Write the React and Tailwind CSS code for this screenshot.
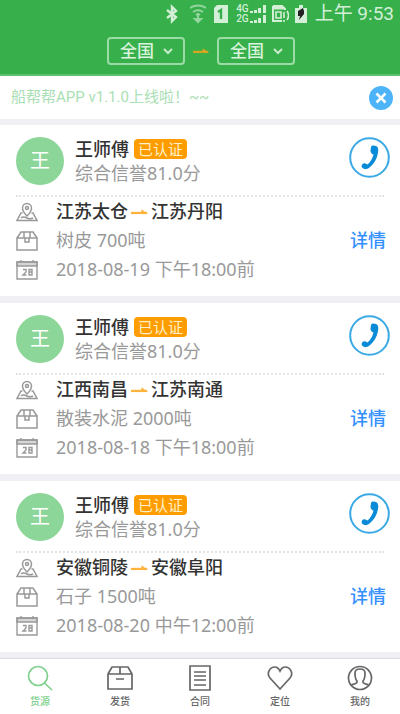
import React, { useState } from 'react';

const orders = [
  { id: 1, driver: '王师傅', initial: '王', score: '81.0', from: '江苏太仓', to: '江苏丹阳', cargo: '树皮 700吨', time: '2018-08-19 下午18:00前' },
  { id: 2, driver: '王师傅', initial: '王', score: '81.0', from: '江西南昌', to: '江苏南通', cargo: '散装水泥 2000吨', time: '2018-08-18 下午18:00前' },
  { id: 3, driver: '王师傅', initial: '王', score: '81.0', from: '安徽铜陵', to: '安徽阜阳', cargo: '石子 1500吨', time: '2018-08-20 中午12:00前' },
];

const ArrowIcon = ({ className }) => (
  <svg className={className} viewBox="0 0 18 8" fill="none">
    <path d="M0 5h17" stroke="currentColor" strokeWidth="2.4" />
    <path d="M11 1l7 5h-7z" fill="currentColor" />
  </svg>
);

const StatusBar = () => (
  <div className="flex h-7 items-center justify-end pr-1.5 text-[#d3efd8]">
    <svg className="mr-3 h-5 w-3" viewBox="0 0 12 20" fill="none" stroke="currentColor" strokeWidth="2.4">
      <path d="M1 6l9 7-4 4V3l4 4-9 7" />
    </svg>
    <svg className="mr-2 h-5 w-4 opacity-60" viewBox="0 0 16 20" fill="none" stroke="currentColor" strokeWidth="2">
      <path d="M0 4c5-3 11-3 16 0M3 8c3-2 7-2 10 0M6 11c1-1 3-1 4 0" />
      <path d="M8 9v5" />
      <path d="M5 15h6l-3 3z" fill="currentColor" />
    </svg>
    <svg className="mr-2 h-5 w-3.5" viewBox="0 0 14 20">
      <path d="M3 1h11v18H0V4z" fill="currentColor" />
      <path d="M4 8l3-2v9" stroke="#37b04b" strokeWidth="2.4" fill="none" />
    </svg>
    <div className="mr-1 flex h-5 items-center">
      <div className="flex flex-col text-[10px] leading-[10px] font-medium">
        <span>4G</span>
        <span>2G</span>
      </div>
      <svg className="h-5 w-[18px]" viewBox="0 0 18 20" fill="currentColor">
        <path d="M1 7h3v2H1zM5 6h3v3H5zM9 4h3v5H9zM14 1h3v8h-3zM1 17h3v2H1zM5 16h3v3H5zM9 14h3v5H9zM14 11h3v8h-3z" />
      </svg>
    </div>
    <svg className="mr-1.5 h-5 w-[18px]" viewBox="0 0 18 20" fill="none" stroke="currentColor" strokeWidth="2">
      <path d="M2 2h9l3 3v1M2 2v15h9" />
      <path d="M2 4h11" strokeWidth="3" />
      <path d="M5 8h5v6H5zM13 8v6M13 16v2M16 7c2 3 2 6 0 9" strokeWidth="1.6" />
    </svg>
    <svg className="mr-2 h-5 w-3" viewBox="0 0 12 20">
      <path d="M4 1h4v3h4v15H0V4h4z" fill="currentColor" />
      <path d="M8 4L3 7v5h2l-1 4 5-6V7z" fill="#222" />
    </svg>
    <span className="text-[19px] leading-7">上午 9:53</span>
  </div>
);

const RegionSelect = ({ label }) => {
  const [value, setValue] = useState('全国');

  return (
    <div className="relative">
      <select
        aria-label={label}
        value={value}
        onChange={(e) => setValue(e.target.value)}
        className="block h-7 w-[78px] appearance-none rounded border-2 border-[#9bdba6] bg-transparent pl-[11px] text-[17px] leading-6 font-medium text-[#d9f3dd]"
      >
        <option>全国</option>
      </select>
      <svg className="pointer-events-none absolute top-2.5 right-3 h-2 w-2.5" viewBox="0 0 10 8" fill="none" stroke="#c5ebcb" strokeWidth="2">
        <path d="M1 2l4 4 4-4" />
      </svg>
    </div>
  );
};

const PlaceIcon = () => (
  <svg className="h-[22px] w-[22px]" viewBox="0 0 22 22" fill="none" stroke="currentColor" strokeWidth="1.5">
    <path d="M11 15C8 12 6.500 10 6.500 7a4.500 4.500 0 019 0c0 3-1.500 5-4.500 8z" />
    <circle cx="11" cy="7" r="1.500" />
    <path d="M6.500 12H5l-4 7.500h20L17 12h-1.500" />
    <path d="M5 17c2-2 4-1 6 0s4 1 6 0" />
  </svg>
);

const CargoIcon = () => (
  <svg className="h-[22px] w-[22px]" viewBox="0 0 22 22" fill="none" stroke="currentColor" strokeWidth="1.5">
    <path d="M1 8h20v12H1zM1 8l4-6h12l4 6M8 2v6M14 2v6M9 8v4h4V8" />
  </svg>
);

const BoxIcon = () => (
  <svg className="h-[26px] w-[26px]" viewBox="0 0 26 26" fill="none" stroke="currentColor" strokeWidth="1.7">
    <path d="M1 9l4-7h16l4 7v15H1zM1 9h24M13 2v7M9 14h8" />
  </svg>
);

const CalendarIcon = () => (
  <svg className="h-[22px] w-[22px]" viewBox="0 0 22 22" fill="none" stroke="currentColor" strokeWidth="1.4">
    <path d="M1 3h20v17H1zM5 1v3M17 1v3" />
    <path d="M1 3h20v4H1z" fill="currentColor" fillOpacity="0.4" />
    <path d="M7 10.500h3v2.500l-3 3h3.500M13 10.500h3V16h-3zM13 13h3" />
  </svg>
);

const PhoneIcon = () => (
  <svg className="h-[41px] w-[41px]" viewBox="0 0 41 41" fill="none">
    <circle cx="20.500" cy="20.500" r="19.300" stroke="#3ba9e4" strokeWidth="2" />
    <path
      d="M22 10c0-1.500 2.500-2 5-1 2.500 1 2.500 4 2 7-1 6-4 11-9 15-2 1.500-5 1.500-6.500 0-1.500-1.500-1-4 1-4.500 1.500-.5 2.500.5 4 1 3-2.500 5-6 6-10-2-.5-3-2-3-4z"
      fill="#0a8bd8"
    />
  </svg>
);

const OrderCard = ({ order }) => (
  <article className="bg-white px-4 py-3">
    <div className="flex items-start">
      <div className="flex h-12 w-12 items-center justify-center rounded-full bg-[#8bd698] text-xl text-white">
        {order.initial}
      </div>
      <div className="ml-[11px] flex-1">
        <div className="flex h-6 items-center">
          <h2 className="text-lg leading-6 font-medium text-[#333]">{order.driver}</h2>
          <span className="ml-[5px] rounded bg-[#ff9d00] px-1 text-[15px] leading-5 text-[#fff0c8]">已认证</span>
        </div>
        <p className="text-lg leading-6 text-[#999]">综合信誉{order.score}分</p>
      </div>
      <button type="button" aria-label="拨打电话" className="-mr-1.5">
        <PhoneIcon />
      </button>
    </div>

    <div className="mt-2.5 flex items-center border-t-2 border-dotted border-[#e4e4e4] text-lg leading-[29px] text-[#999]">
      <ul className="flex-1">
        <li className="flex items-center">
          <PlaceIcon />
          <span className="ml-[18px] flex items-center font-medium text-[#333]">
            {order.from}
            <ArrowIcon className="mx-[3px] h-2 w-[17px] text-[#ffb33c]" />
            {order.to}
          </span>
        </li>
        <li className="flex items-center">
          <CargoIcon />
          <span className="ml-[18px]">{order.cargo}</span>
        </li>
        <li className="flex items-center">
          <CalendarIcon />
          <span className="ml-[18px]">{order.time}</span>
        </li>
      </ul>
      <a href="#detail" className="-mr-0.5 font-medium text-[#3490ff]">详情</a>
    </div>
  </article>
);

const tabs = [
  {
    label: '货源',
    icon: (
      <svg className="h-[26px] w-[26px]" viewBox="0 0 26 26" fill="none" stroke="currentColor" strokeWidth="1.7">
        <circle cx="11" cy="11" r="9.500" />
        <path d="M17.500 18l7.500 7" />
      </svg>
    ),
  },
  { label: '发货', icon: <BoxIcon /> },
  {
    label: '合同',
    icon: (
      <svg className="h-[26px] w-[26px]" viewBox="0 0 26 26" fill="none" stroke="currentColor" strokeWidth="1.7">
        <path d="M3 1h20v24H3zM7 7h12M7 11h12M7 15h12M7 20h12" />
      </svg>
    ),
  },
  {
    label: '定位',
    icon: (
      <svg className="h-[26px] w-[26px]" viewBox="0 0 26 26" fill="none" stroke="currentColor" strokeWidth="1.7">
        <path d="M13 24L3 13C-1 8 3 2 8 2c3 0 4 2 5 4 1-2 2-4 5-4 5 0 9 6 5 11z" />
      </svg>
    ),
  },
  {
    label: '我的',
    icon: (
      <svg className="h-[26px] w-[26px]" viewBox="0 0 26 26" fill="none" stroke="currentColor" strokeWidth="1.7">
        <circle cx="13" cy="13" r="11.500" />
        <path d="M4 20c3-1 6-1 6-3V16c-2-2-2-5-2-8 0-3 2-4 5-4s5 1 5 4c0 3 0 6-2 8v1c0 2 3 2 6 3" />
      </svg>
    ),
  },
];

const App = () => {
  const [showNotice, setShowNotice] = useState(true);
  const [activeTab, setActiveTab] = useState('货源');

  return (
    <div className="flex min-h-screen flex-col bg-[#efeff4] font-['Noto_Sans','Noto_Sans_CJK_SC',sans-serif]">
      <header className="h-[76px] border-b-2 border-[#5fc070] bg-[#37b04b] font-[Roboto,'Noto_Sans_CJK_SC',sans-serif]">
        <StatusBar />
        <div className="mt-[9px] flex items-center justify-center gap-2 pl-0.5">
          <RegionSelect label="出发地" />
          <ArrowIcon className="h-2 w-4 text-[#d9a520]" />
          <RegionSelect label="目的地" />
        </div>
      </header>

      {showNotice && (
        <div className="flex h-[43px] items-center justify-between bg-white pr-[7px] pl-[11px]">
          <p className="font-[Roboto,'Noto_Sans_CJK_SC',sans-serif] text-[15px] text-[#a9e0b4]">船帮帮APP v1.1.0上线啦！~~</p>
          <button
            type="button"
            aria-label="关闭"
            onClick={() => setShowNotice(false)}
            className="flex h-6 w-6 items-center justify-center rounded-full bg-[#4db4fa]"
          >
            <svg className="h-3 w-3" viewBox="0 0 12 12" stroke="#fff" strokeWidth="2.500">
              <path d="M1.500 1.500l9 9M10.500 1.500l-9 9" />
            </svg>
          </button>
        </div>
      )}

      <main className="flex flex-1 flex-col gap-[7px] py-1.5">
        {orders.map((order) => (
          <OrderCard key={order.id} order={order} />
        ))}
      </main>

      <nav className="grid grid-cols-5 border-t border-[#ddd] bg-white pt-1.5 pb-[5px]">
        {tabs.map((tab) => (
          <button
            key={tab.label}
            type="button"
            onClick={() => setActiveTab(tab.label)}
            className={`flex flex-col items-center ${activeTab === tab.label ? 'text-[#7fd08d]' : 'text-[#666]'}`}
          >
            {tab.icon}
            <span className="mt-0.5 text-[10px] leading-4 font-medium">{tab.label}</span>
          </button>
        ))}
      </nav>
    </div>
  );
};

export default App;
